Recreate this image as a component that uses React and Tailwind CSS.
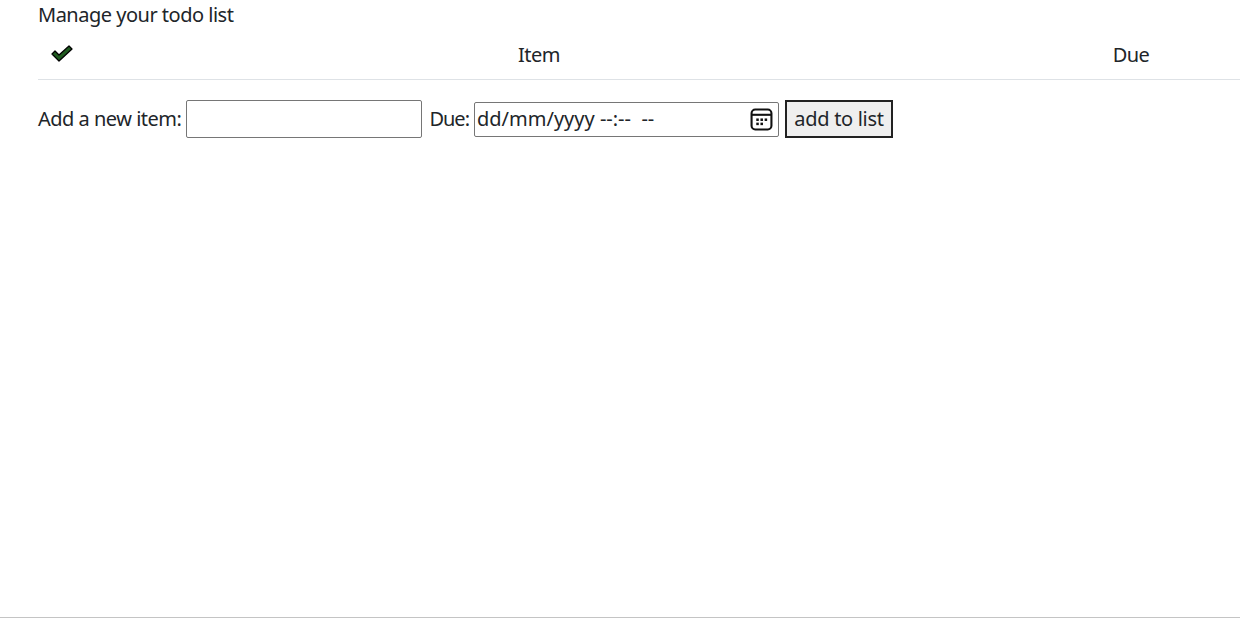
import React from "react";

function Check() {
  return (
    <svg width="24" height="20" viewBox="0 0 24 20">
      <path d="M2 10 L5 7 L9 11 L19 2 L22 5 L9 17 Z" fill="#1f5a1f" stroke="#000" strokeWidth="1.3" strokeLinejoin="round" />
    </svg>
  );
}

function Cal() {
  return (
    <svg width="23" height="23" viewBox="0 0 22 22">
      <rect x="1.5" y="1.5" width="19" height="19" rx="3.5" fill="none" stroke="#111" strokeWidth="2" />
      <line x1="1.5" y1="6.5" x2="20.5" y2="6.5" stroke="#111" strokeWidth="2" />
      <rect x="6" y="10" width="2.4" height="2.4" fill="#111" />
      <rect x="10" y="10" width="2.4" height="2.4" fill="#111" />
      <rect x="14" y="10" width="2.4" height="2.4" fill="#111" />
      <rect x="6" y="14" width="2.4" height="2.4" fill="#111" />
      <rect x="10" y="14" width="2.4" height="2.4" fill="#111" />
    </svg>
  );
}

export default function App() {
  return (
    <div className="w-[1240px] h-[618px] bg-white overflow-hidden flex flex-col text-[#212529] text-[20px] tracking-[-0.5px]" style={{ fontFamily: '"Noto Sans", sans-serif' }}>
      <div className="flex-1 pl-[38px] overflow-hidden">
        <div className="h-[30px] flex items-center leading-none">Manage your todo list</div>
        <div className="flex w-[1240px] h-[50px] border-b border-[#dee2e6] items-center">
          <div className="w-[47px] flex justify-center pb-[2px]"><Check /></div>
          <div className="w-[908px] text-center">Item</div>
          <div className="w-[276px] text-center">Due</div>
        </div>
        <div className="flex items-center mt-[20px] h-[38px]">
          <span className="mr-[5px]">Add a new item:</span>
          <div className="w-[236px] h-[38px] border border-[#767676] rounded-[2px] bg-white" />
          <span className="ml-[7px] mr-[5px] tracking-[-1px]">Due:</span>
          <div className="w-[305px] h-[35px] border border-[#767676] rounded-[2px] flex items-center pl-[2px] pr-[5px] justify-between tracking-normal">
            <span className="whitespace-pre">dd/mm/yyyy --:--  --</span>
            <Cal />
          </div>
          <div className="ml-[6px] w-[108px] h-[38px] bg-[#efefef] border-2 border-[#222] flex items-center justify-center leading-none tracking-[-0.3px]">add to list</div>
        </div>
      </div>
      <div className="h-px bg-[#c4c4c4]" />
    </div>
  );
}
